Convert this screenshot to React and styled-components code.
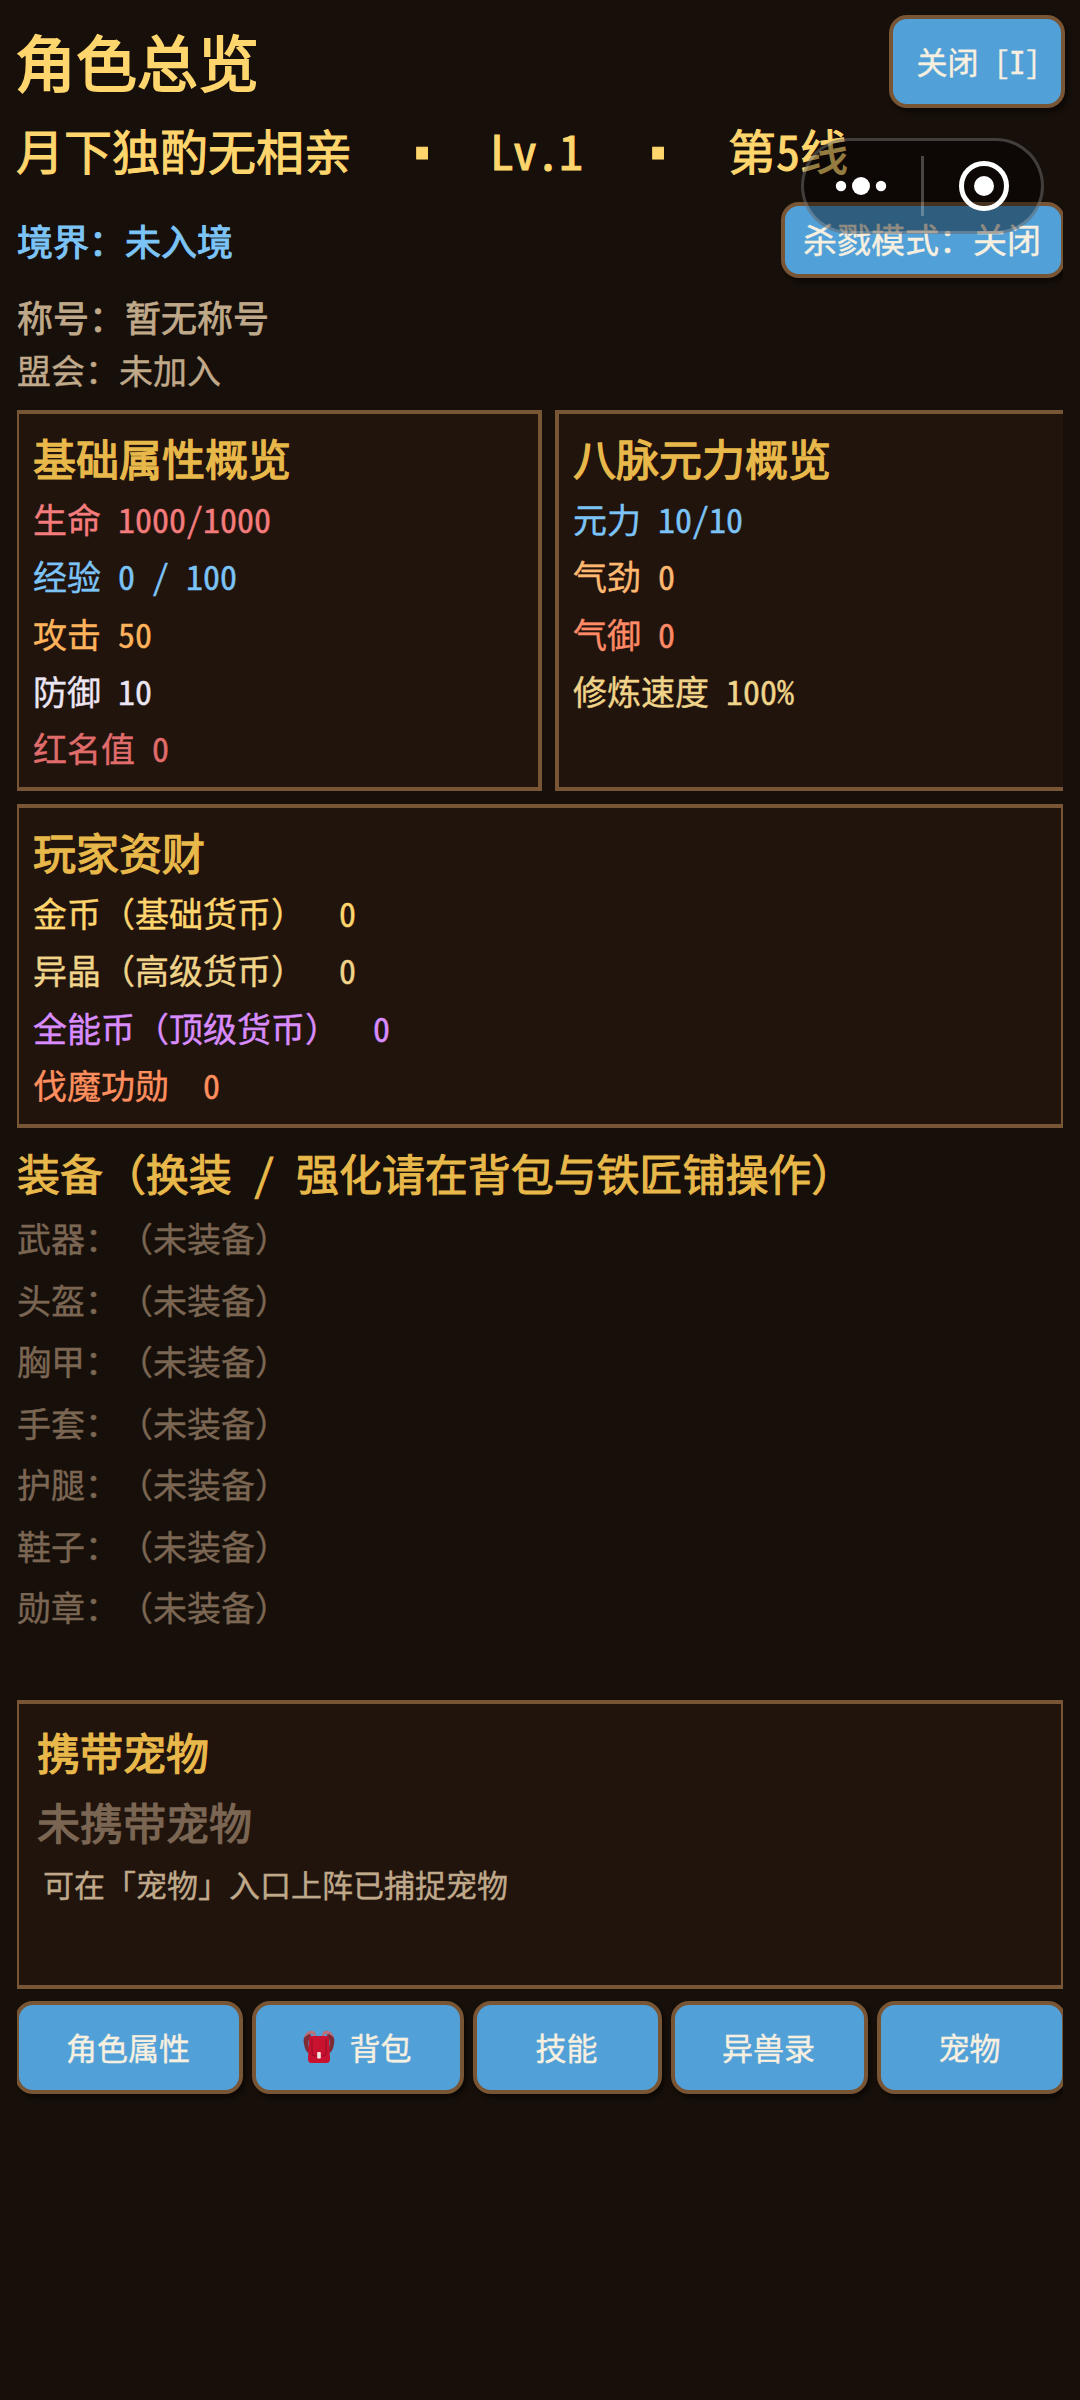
import React from 'react';
import styled, { createGlobalStyle } from 'styled-components';

const GlobalStyle = createGlobalStyle`
  * {
    box-sizing: border-box;
  }

  body {
    margin: 0;
    background-color: #170f09;
  }
`;

const Screen = styled.main`
  position: relative;
  width: 1080px;
  height: 2400px;
  overflow: hidden;
  background-color: #170f09;
  font-family: 'Noto Sans Mono CJK SC', 'Noto Sans CJK SC', monospace;
  text-spacing-trim: space-all;
  -webkit-text-stroke: 0.4px currentColor;
`;

const TopBar = styled.header`
  display: flex;
  justify-content: space-between;
  padding: 15px 15px 0 15px;
`;

const Title = styled.h1`
  margin: 0;
  font-size: 61px;
  line-height: 91px;
  font-weight: 400;
  color: #ffd66e;
  -webkit-text-stroke-width: 1.8px;
`;

const Subtitle = styled.h2`
  margin: 0;
  padding-left: 16px;
  font-size: 48px;
  line-height: 83px;
  font-weight: 400;
  color: #ffd66e;
  white-space: pre;
  -webkit-text-stroke-width: 1px;
`;

const Dot = styled.span`
  display: inline-block;
  width: 44px;
  font-family: 'DejaVu Sans Mono', monospace;
  font-size: 66px;
  font-weight: 700;
  line-height: 0;
  text-align: center;
  vertical-align: -6px;
`;

const Level = styled.span`
  margin: 0 6px 0 -2px;
  letter-spacing: -1px;
`;

// Клипва съдържанието странично, както при скрол панел
const Body = styled.section`
  margin: 0 17px;
  padding-top: 11px;
  overflow: hidden;
`;

const BodyInner = styled.div`
  width: 1050px;
  margin-left: -2px;
`;

const Button = styled.button`
  display: flex;
  justify-content: center;
  align-items: center;
  flex: none;
  width: ${(p) => p.$width}px;
  height: ${(p) => p.$height || 93}px;
  padding: 0 ${(p) => p.$shift || 2}px 2px 0;
  border: 4px solid #785535;
  border-radius: 18px;
  background-color: #52a0d8;
  box-shadow: 3px 4px 4px rgba(0, 0, 0, 0.45);
  color: #f7f0e0;
  font-family: inherit;
  font-size: ${(p) => p.$size || 31}px;
  line-height: 1;
  white-space: pre;
  cursor: pointer;
`;

const CloseButton = styled(Button)`
  padding: 0 0 2px 3px;
`;

const RealmRow = styled.div`
  display: flex;
  justify-content: space-between;
  align-items: center;
  height: 76px;
`;

const Info = styled.div`
  padding-left: 2px;
  font-size: ${(p) => p.$size}px;
  line-height: ${(p) => p.$line}px;
  color: ${(p) => p.$color || '#bfa98a'};
  -webkit-text-stroke-width: ${(p) => p.$stroke || 0.4}px;
`;

const Infos = styled.div`
  padding: 12px 0 13px;
`;

const Cards = styled.div`
  display: flex;
  gap: 13px;
`;

const Card = styled.article`
  flex: none;
  width: ${(p) => p.$width}px;
  height: ${(p) => p.$height}px;
  margin-top: ${(p) => p.$top || 0}px;
  padding: ${(p) => p.$pad || '11px 14px'};
  border: 4px solid #785535;
  background-color: #21140d;
`;

const CardTitle = styled.h3`
  margin: 0;
  font-size: 43px;
  line-height: ${(p) => p.$line || 65}px;
  font-weight: 400;
  color: ${(p) => p.$color || '#e8b84a'};
  -webkit-text-stroke-width: 1.3px;
`;

const Stat = styled.div`
  height: 57.3px;
  font-size: 34px;
  line-height: 57.3px;
  color: ${(p) => p.$color};
  white-space: pre;
`;

const GearTitle = styled(CardTitle)`
  padding: 13px 0 3px 2px;
  line-height: 63px;
  letter-spacing: -0.06px;
  white-space: pre;
  -webkit-text-stroke-width: 1px;
`;

const GearRow = styled.div`
  height: 61.5px;
  padding-left: 2px;
  font-size: 34px;
  line-height: 61.5px;
  color: #7a6653;
`;

const Hint = styled.p`
  margin: 0;
  padding-left: 6px;
  font-size: 31px;
  line-height: 56px;
  color: #bfa98a;
`;

const Tabs = styled.nav`
  display: flex;
  gap: 9px;
  padding: 12px 0 14px;
`;

const BagIcon = styled.svg`
  flex: none;
  width: 32px;
  height: 33px;
  margin-right: 15px;
`;

const Capsule = styled.div`
  position: absolute;
  left: 801px;
  top: 138px;
  width: 243px;
  height: 96px;
  border: 3px solid rgba(255, 255, 255, 0.22);
  border-radius: 48px;
  background-color: rgba(0, 0, 0, 0.42);

  svg {
    display: block;
    width: 237px;
    height: 90px;
  }
`;

const baseStats = [
  ['生命 1000/1000', '#f47c7c'],
  ['经验 0 / 100', '#7cc4f8'],
  ['攻击 50', '#ffb45c'],
  ['防御 10', '#ece6f4'],
  ['红名值 0', '#e06c6c'],
];

const powerStats = [
  ['元力 10/10', '#7cc4f8'],
  ['气劲 0', '#ffb870'],
  ['气御 0', '#ff8a66'],
  ['修炼速度 100%', '#f0d48a'],
];

const wealth = [
  ['金币（基础货币）  0', '#ffd66e'],
  ['异晶（高级货币）  0', '#f0d48a'],
  ['全能币（顶级货币）  0', '#d98cff'],
  ['伐魔功勋  0', '#ff8f5e'],
];

const gear = ['武器', '头盔', '胸甲', '手套', '护腿', '鞋子', '勋章'];

const Stats = ({ items }) =>
  items.map(([text, color]) => (
    <Stat key={text} $color={color}>
      {text}
    </Stat>
  ));

const Backpack = () => (
  <BagIcon viewBox="0 0 32 33">
    <path d="M7 2C1 4 0 9 1 14c1 5 2 8 5 9l1-3C5 17 4 10 8 6z" fill="#7d2b35" />
    <path d="M25 2c6 2 7 7 6 12-1 5-2 8-5 9l-1-3c2-3 3-10-1-14z" fill="#7d2b35" />
    <path d="M1 8C2 3 6 0 10 1c3 1 3 4 3 6h-2c0-2-1-3-3-3-3 0-5 2-7 4z" fill="#b9707a" />
    <path d="M31 8c-1-5-5-8-9-7-3 1-3 4-3 6h2c0-2 1-3 3-3 3 0 5 2 7 4z" fill="#b9707a" />
    <path d="M9 6h14c2 0 3 1 3 3l1 20c0 2-1 4-3 4H8c-2 0-3-2-3-4L6 9c0-2 1-3 3-3z" fill="#c9122f" />
    <path d="M9 9v14c0 2 1 3 3 3h8c2 0 3-1 3-3V9" fill="none" stroke="#9c0f28" strokeWidth="1.2" />
    <rect x="14.2" y="22" width="3.6" height="6.5" rx="0.8" fill="#f5e9e6" />
  </BagIcon>
);

const App = () => (
  <Screen>
    <GlobalStyle />
    <TopBar>
      <Title>角色总览</Title>
      <CloseButton $width={176}>关闭 [I]</CloseButton>
    </TopBar>
    <Subtitle>
      月下独酌无相亲{'  '}
      <Dot>·</Dot>
      {'  '}
      <Level>Lv.1</Level>
      {'  '}
      <Dot>·</Dot>
      {'  '}第5线
    </Subtitle>

    <Body>
      <BodyInner>
        <RealmRow>
          <Info $size={36} $line={76} $stroke={1} $color="#7cc4f8">
            境界：未入境
          </Info>
          <Button $width={284} $height={76} $size={34}>
            杀戮模式：关闭
          </Button>
        </RealmRow>
        <Infos>
          <Info $size={36} $line={52} $stroke={0.8}>
            称号：暂无称号
          </Info>
          <Info $size={34} $line={55}>
            盟会：未加入
          </Info>
        </Infos>

        <Cards>
          <Card $width={527} $height={381}>
            <CardTitle>基础属性概览</CardTitle>
            <Stats items={baseStats} />
          </Card>
          <Card $width={527} $height={381}>
            <CardTitle>八脉元力概览</CardTitle>
            <Stats items={powerStats} />
          </Card>
        </Cards>

        <Card $width={1050} $height={324} $top={13}>
          <CardTitle>玩家资财</CardTitle>
          <Stats items={wealth} />
        </Card>

        <GearTitle>装备（换装 / 强化请在背包与铁匠铺操作）</GearTitle>
        {gear.map((slot) => (
          <GearRow key={slot}>{slot}：（未装备）</GearRow>
        ))}

        <Card $width={1050} $height={289} $top={62.5} $pad="12px 18px">
          <CardTitle $line={70}>携带宠物</CardTitle>
          <CardTitle $line={70} $color="#7a6653">
            未携带宠物
          </CardTitle>
          <Hint>可在「宠物」入口上阵已捕捉宠物</Hint>
        </Card>

        <Tabs>
          <Button $width={228}>角色属性</Button>
          <Button $width={212}>
            <Backpack />
            背包
          </Button>
          <Button $width={189}>技能</Button>
          <Button $width={197}>异兽录</Button>
          <Button $width={189} $shift={4}>
            宠物
          </Button>
        </Tabs>
      </BodyInner>
    </Body>

    <Capsule>
      <svg viewBox="0 0 237 90">
        <g fill="#ffffff">
          <circle cx="37" cy="45" r="5.2" />
          <circle cx="57" cy="45" r="9" />
          <circle cx="77" cy="45" r="5.2" />
          <circle cx="180" cy="45" r="10" />
        </g>
        <circle cx="180" cy="45" r="22.5" fill="none" stroke="#ffffff" strokeWidth="5" />
        <rect x="117" y="15" width="3" height="60" fill="#ffffff" opacity="0.25" />
      </svg>
    </Capsule>
  </Screen>
);

export default App;
